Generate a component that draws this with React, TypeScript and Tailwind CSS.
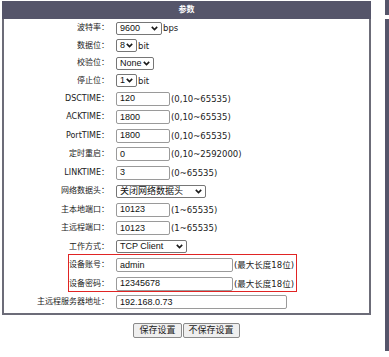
import React from "react";

const LABEL_FONT = { fontFamily: '"DejaVu Sans", "Noto Sans CJK SC", sans-serif' };
const CTRL_FONT = { fontFamily: '"Liberation Sans", "Noto Sans CJK SC", sans-serif' };

type Row = {
  label: string;
  kind: "select" | "input";
  value: string;
  w: string;
  suffix?: string;
  h: string;
};

const rows: Row[] = [
  { label: "波特率：", kind: "select", value: "9600", w: "w-[46px]", suffix: "bps", h: "h-[17.5px]" },
  { label: "数据位：", kind: "select", value: "8", w: "w-[21px]", suffix: "bit", h: "h-[17.5px]" },
  { label: "校验位：", kind: "select", value: "None", w: "w-[38px]", h: "h-[17.5px]" },
  { label: "停止位：", kind: "select", value: "1", w: "w-[21px]", suffix: "bit", h: "h-[17.5px]" },
  { label: "DSCTIME：", kind: "input", value: "120", w: "w-[54px]", suffix: "(0,10~65535)", h: "h-[18.5px]" },
  { label: "ACKTIME：", kind: "input", value: "1800", w: "w-[54px]", suffix: "(0,10~65535)", h: "h-[18.5px]" },
  { label: "PortTIME：", kind: "input", value: "1800", w: "w-[54px]", suffix: "(0,10~65535)", h: "h-[18.5px]" },
  { label: "定时重启：", kind: "input", value: "0", w: "w-[54px]", suffix: "(0,10~2592000)", h: "h-[18.5px]" },
  { label: "LINKTIME：", kind: "input", value: "3", w: "w-[54px]", suffix: "(0~65535)", h: "h-[18.5px]" },
  { label: "网络数据头：", kind: "select", value: "关闭网络数据头", w: "w-[90px]", h: "h-[18.5px]" },
  { label: "主本地端口：", kind: "input", value: "10123", w: "w-[54px]", suffix: "(1~65535)", h: "h-[18.5px]" },
  { label: "主远程端口：", kind: "input", value: "10123", w: "w-[54px]", suffix: "(1~65535)", h: "h-[18.5px]" },
  { label: "工作方式：", kind: "select", value: "TCP Client", w: "w-[71px]", h: "h-[18.5px]" },
  { label: "设备账号：", kind: "input", value: "admin", w: "w-[117px]", suffix: "(最大长度18位)", h: "h-[18.5px]" },
  { label: "设备密码：", kind: "input", value: "12345678", w: "w-[117px]", suffix: "(最大长度18位)", h: "h-[18.5px]" },
  { label: "主远程服务器地址：", kind: "input", value: "192.168.0.73", w: "w-[171px]", h: "h-[18.5px]" },
];

function Chevron() {
  return (
    <svg width="7" height="5" viewBox="0 0 7 5" className="shrink-0">
      <path d="M0.8 0.9 L3.5 3.6 L6.2 0.9" fill="none" stroke="#1a1a1a" strokeWidth="1.6" />
    </svg>
  );
}

function Control({ row }: { row: Row }) {
  if (row.kind === "select") {
    return (
      <div
        className={`${row.w} h-[13px] flex items-center justify-between pl-[3px] pr-[3px] border border-[#767676] rounded-[2px] bg-white text-[9px] text-[#111] leading-none`}
        style={CTRL_FONT}
      >
        <span className="whitespace-nowrap">{row.value}</span>
        <Chevron />
      </div>
    );
  }
  return (
    <div
      className={`${row.w} h-[14px] flex items-center pl-[3px] border border-[#9a9a9a] rounded-[2px] bg-white text-[9px] text-[#111] leading-none`}
      style={CTRL_FONT}
    >
      {row.value}
    </div>
  );
}

export default function App() {
  return (
    <div className="relative w-[389px] h-[357px] bg-white overflow-hidden">
      <div className="flex">
        {/* parameter panel */}
        <div className="ml-[2px] mt-px w-[369px] flex flex-col">
          <div className="h-[18px] bg-[#55556a] flex items-center justify-center">
            <span className="text-[8px] text-white font-bold" style={LABEL_FONT}>参数</span>
          </div>
          <div className="border-x-2 border-b-2 border-[#6c6c78] pt-[0.5px] pb-px">
            {rows.map((row) => (
              <div key={row.label} className={`${row.h} flex items-center`}>
                <div className="w-[105px] text-right text-[8px] text-[#222] whitespace-nowrap leading-none" style={LABEL_FONT}>
                  {row.label}
                </div>
                <div className="ml-[7px] flex items-center">
                  <Control row={row} />
                  {row.suffix && (
                    <span className="ml-[1px] text-[8.5px] text-[#222] whitespace-nowrap leading-none" style={LABEL_FONT}>
                      {row.suffix}
                    </span>
                  )}
                </div>
              </div>
            ))}
          </div>
          <div className="mt-[8px] flex justify-center gap-px">
            <button className="h-[15px] px-[5px] bg-[#efefef] border border-[#8a8a8a] rounded-[2px] text-[9px] text-[#222] leading-none" style={CTRL_FONT}>
              保存设置
            </button>
            <button className="h-[15px] px-[5px] bg-[#efefef] border border-[#8a8a8a] rounded-[2px] text-[9px] text-[#222] leading-none" style={CTRL_FONT}>
              不保存设置
            </button>
          </div>
        </div>
        {/* edge of the neighbouring panel */}
        <div className="ml-[14px] w-[4px] flex flex-col">
          <div className="h-[15px] bg-[#55556a]" />
          <div className="mt-[4px] h-[332px] bg-[#55556a]" />
        </div>
      </div>
      {/* red highlight around account rows */}
      <div className="absolute left-[68px] top-[254px] w-[229px] h-[38px] border-[1.5px] border-[#e02424]" />
    </div>
  );
}
